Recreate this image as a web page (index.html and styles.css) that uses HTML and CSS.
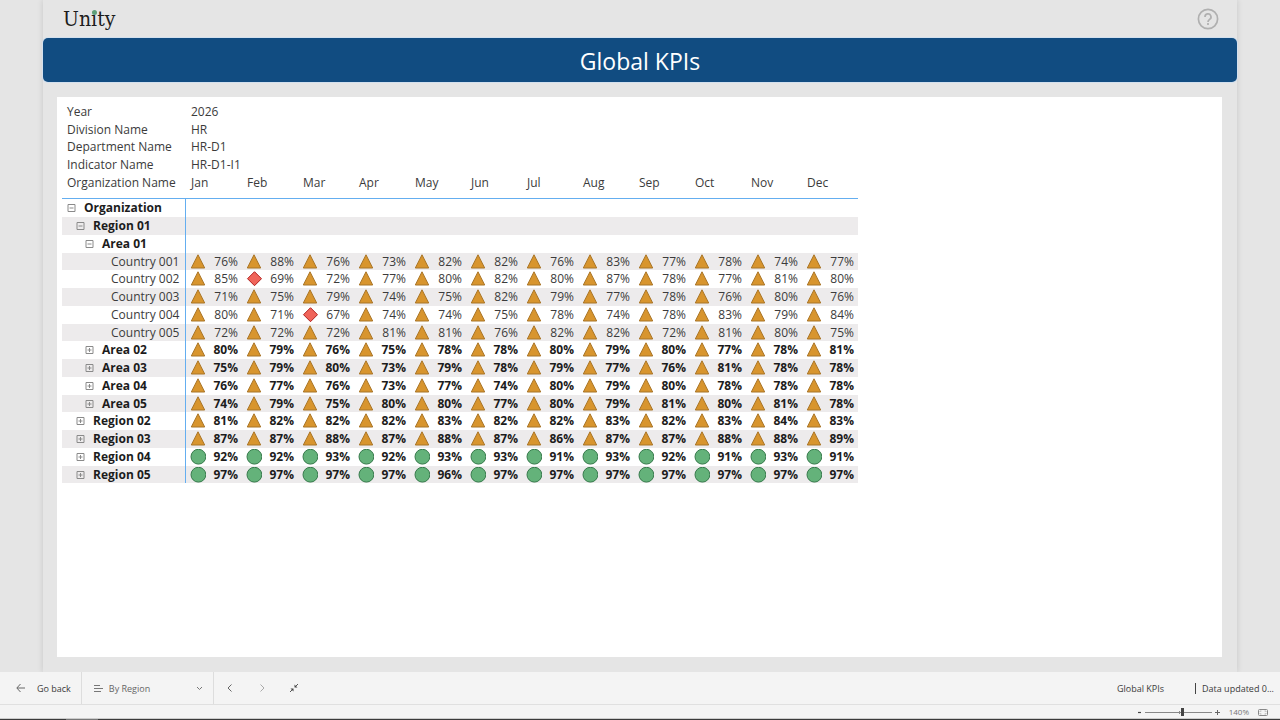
FILE: index.html
```html
<!DOCTYPE html>
<html lang="en">
<head>
<meta charset="utf-8">
<meta name="viewport" content="width=device-width, initial-scale=1">
<title>Global KPIs</title>
<link rel="stylesheet" href="styles.css">
</head>
<body>
<svg class="sprite" aria-hidden="true">
  <symbol id="triangle" viewBox="0 0 16 16"><path d="M8 .8 14.700 14H1.300z" fill="#d8952e" stroke="#a87426"/></symbol>
  <symbol id="diamond" viewBox="0 0 16 16"><path d="M8.500.7l7 7-7 7-7-7z" fill="#f0645a" stroke="#b0201f"/></symbol>
  <symbol id="circle" viewBox="0 0 16 16"><circle cx="8.400" cy="7.700" r="7.400" fill="#64b27a" stroke="#377a4c"/></symbol>
  <symbol id="minus" viewBox="0 0 9 9"><path d="M1 .5h7v7H1zM2.500 4h4" fill="none" stroke="#8a8a8a"/></symbol>
  <symbol id="plus" viewBox="0 0 9 9"><path d="M1 .5h7v7H1zM2.500 4h4M4.500 2v4" fill="none" stroke="#8a8a8a"/></symbol>
</svg>

<main class="stage">
  <div class="report">
    <header class="report-head">
      <div class="logo">Un<span class="logo-i">i</span>ty</div>
      <button class="help" type="button" aria-label="Help">
        <svg width="22" height="22" viewBox="0 0 22 22" fill="none" stroke="#b0b0b0" stroke-width="1.7"><circle cx="11" cy="11" r="9.6"/><path d="M8 9a3 3 0 1 1 4.6 2.4C11.500 12.200 11 12.700 11 14"/><path d="M11 15v2"/></svg>
      </button>
    </header>
    <h1 class="banner">Global KPIs</h1>
    <section class="card">
      <table class="matrix">
        <thead>
          <tr><th scope="row">Year</th><td colspan="12">2026</td></tr>
          <tr><th scope="row">Division Name</th><td colspan="12">HR</td></tr>
          <tr><th scope="row">Department Name</th><td colspan="12">HR-D1</td></tr>
          <tr><th scope="row">Indicator Name</th><td colspan="12">HR-D1-I1</td></tr>
          <tr class="months"><th scope="col">Organization Name</th><th scope="col">Jan</th><th scope="col">Feb</th><th scope="col">Mar</th><th scope="col">Apr</th><th scope="col">May</th><th scope="col">Jun</th><th scope="col">Jul</th><th scope="col">Aug</th><th scope="col">Sep</th><th scope="col">Oct</th><th scope="col">Nov</th><th scope="col">Dec</th></tr>
        </thead>
        <tbody id="rows"></tbody>
      </table>
    </section>
  </div>
</main>

<footer>
  <nav class="toolbar">
    <button class="back" type="button">
      <svg width="10" height="10" viewBox="0 0 10 10" fill="none" stroke="#666"><path d="M9 5H1M4.500 1 .8 5l3.700 4"/></svg>
      Go back
    </button>
    <label class="picker">
      <svg width="9" height="9" viewBox="0 0 9 9" stroke="#777"><path d="M0 1.500h6M0 4.500h9M0 7.500h7"/></svg>
      <select aria-label="Page"><option>By Region</option></select>
      <svg width="7" height="5" viewBox="0 0 7 5" fill="none" stroke="#777"><path d="M1 1l2.500 2.500L6 1"/></svg>
    </label>
    <div class="steps">
      <button type="button" aria-label="Previous"><svg width="8" height="10" viewBox="0 0 8 10" fill="none" stroke="#666"><path d="M5.500 1.500 2 5l3.500 3.500"/></svg></button>
      <button type="button" aria-label="Next"><svg width="8" height="10" viewBox="0 0 8 10" fill="none" stroke="#aaa"><path d="M2.500 1.500 6 5 2.500 8.500"/></svg></button>
      <button type="button" aria-label="Exit full screen"><svg width="8" height="8" viewBox="0 0 8 8"><path d="M8 0 5.500 2.500M0 8l2.500-2.500" stroke="#555"/><path d="M4.500.5v3h3zM.5 4.500h3v3z" fill="#444"/></svg></button>
    </div>
    <div class="status">
      <span class="page-name">Global KPIs</span>
      <span class="updated">Data updated 0...</span>
    </div>
  </nav>
  <div class="zoombar">
    <button type="button" aria-label="Zoom out"><svg width="5" height="5" viewBox="0 0 5 5"><path d="M1 2.500h3" stroke="#444" stroke-width="1.200"/></svg></button>
    <input type="range" min="10" max="240" value="140" aria-label="Zoom">
    <button type="button" aria-label="Zoom in"><svg width="5" height="5" viewBox="0 0 5 5"><path d="M0 2.500h5M2.500 0v5" stroke="#666"/></svg></button>
    <span class="percent">140%</span>
    <button type="button" aria-label="Fit to page"><svg width="10" height="7" viewBox="0 0 10 7" fill="none" stroke="#888"><rect x=".5" y=".5" width="9" height="6" rx="1"/><path d="M2 3V2h1.500M6.500 2H8v1M2 4v1h1.500M6.500 5H8V4" stroke="#aaa" stroke-width=".7"/></svg></button>
  </div>
  <div class="edge"></div>
</footer>
<script src="rows.js"></script>
</body>
</html>
```
FILE: styles.css
```css
* { box-sizing: border-box; }
body {
  margin: 0;
  min-height: 100vh;
  display: flex;
  flex-direction: column;
  background: #e5e5e5;
  color: #3b3b3b;
  font-family: "Open Sans", "Noto Sans", sans-serif;
  font-size: 12px;
}
button, select { font: inherit; color: inherit; background: none; border: 0; padding: 0; margin: 0; }
button { display: inline-flex; align-items: center; }
svg { display: block; flex: none; }
.sprite { position: absolute; width: 0; height: 0; }

.stage { flex: 1; display: flex; overflow: hidden; padding: 0 43px; }
.report { flex: 1; display: flex; flex-direction: column; box-shadow: 0 0 6px rgba(0, 0, 0, .14); background: #e5e5e5; }
.report-head { height: 38px; display: flex; align-items: center; justify-content: space-between; padding: 0 18px 0 20px; }
.logo { font-family: "DejaVu Serif Condensed", "DejaVu Serif", serif; font-size: 21px; line-height: 24px; color: #1c1c1c; }
.logo-i { position: relative; }
.logo-i::after { content: ""; position: absolute; left: 1px; top: 3px; width: 5px; height: 5px; border-radius: 50%; background: #5f9f79; }
.banner { margin: 0; height: 44px; line-height: 46px; border-radius: 5px; background: #114c81; box-shadow: 0 0 0 1px #d3e0ee; color: #fff; text-align: center; font-size: 23px; font-weight: 400; }
.card { flex: 1; margin: 15px 15px 15px 14px; padding: 6px 5px; background: #fff; }

.matrix { table-layout: fixed; width: 796px; border-collapse: separate; border-spacing: 0; line-height: 17px; }
.matrix tr { height: 18px; }
.matrix th, .matrix td { padding: 0 5px; text-align: left; font-weight: 400; white-space: nowrap; vertical-align: top; }
.matrix tr > :first-child { width: 124px; }
.matrix thead tr:nth-child(4n+2) { height: 17px; }
.matrix .months { height: 25px; }
.matrix .months th { border-bottom: 1px solid #64aef0; }
.matrix tbody { line-height: 16px; }
.matrix tbody tr:nth-child(4n) { height: 17px; }
.matrix tbody tr:nth-child(even) { background: #edebec; }
.matrix tbody th { padding: 1px 0 0 5px; border-right: 1px solid #64aef0; }
.matrix tbody td { padding: 1px 4px 0; }
.matrix tbody .group { font-weight: 700; color: #1c1c1c; }
.matrix tbody .group th, .matrix tbody .group td { font-weight: 700; }
.name { display: flex; align-items: center; gap: 8px; }
.level-1 { padding-left: 9px; }
.level-2 { padding-left: 18px; }
.level-3 { padding-left: 44px; }
.kpi { display: flex; align-items: center; justify-content: space-between; }

.toolbar { height: 32px; display: flex; align-items: stretch; background: #f4f4f4; font-size: 9px; }
.back { gap: 11px; padding: 0 10px 0 16px; border-right: 1px solid #ddd; }
.picker { width: 132px; display: flex; align-items: center; gap: 6px; padding: 0 10px 0 12px; border-right: 1px solid #ddd; color: #666; }
.picker select { flex: 1; appearance: none; outline: 0; }
.steps { display: flex; align-items: center; gap: 24px; padding-left: 12px; }
.status { margin-left: auto; display: flex; align-items: center; gap: 31px; padding-right: 6px; }
.updated { display: flex; align-items: center; gap: 6px; }
.updated::before { content: ""; width: 1px; height: 11px; background: #444; }
.zoombar { height: 14px; display: flex; align-items: center; justify-content: flex-end; gap: 3px; padding: 1px 12px 0 0; background: #f4f4f4; border-top: 1px solid #e0e0e0; font-size: 8px; line-height: 12px; color: #777; }
.zoombar input { appearance: none; width: 67px; height: 10px; margin: 0; background: linear-gradient(#888, #888) center / 100% 1px no-repeat, linear-gradient(#888, #888) 34px center / 1px 3px no-repeat; }
.zoombar input::-webkit-slider-thumb { appearance: none; width: 3px; height: 8px; background: #444; }
.percent { margin: 0 6px; }
.edge { height: 2px; border-top: 1px solid #ccc; background: linear-gradient(90deg, #3a3a3a 66px, #777 66px, #777 98px, #3a3a3a 98px); }
```
FILE: rows.js
```js
const data = [
  ["Organization", 0, "minus", ""],
  ["Region 01", 1, "minus", ""],
  ["Area 01", 2, "minus", ""],
  ["Country 001", 3, "", "76 88 76 73 82 82 76 83 77 78 74 77"],
  ["Country 002", 3, "", "85 69 72 77 80 82 80 87 78 77 81 80"],
  ["Country 003", 3, "", "71 75 79 74 75 82 79 77 78 76 80 76"],
  ["Country 004", 3, "", "80 71 67 74 74 75 78 74 78 83 79 84"],
  ["Country 005", 3, "", "72 72 72 81 81 76 82 82 72 81 80 75"],
  ["Area 02", 2, "plus", "80 79 76 75 78 78 80 79 80 77 78 81"],
  ["Area 03", 2, "plus", "75 79 80 73 79 78 79 77 76 81 78 78"],
  ["Area 04", 2, "plus", "76 77 76 73 77 74 80 79 80 78 78 78"],
  ["Area 05", 2, "plus", "74 79 75 80 80 77 80 79 81 80 81 78"],
  ["Region 02", 1, "plus", "81 82 82 82 83 82 82 83 82 83 84 83"],
  ["Region 03", 1, "plus", "87 87 88 87 88 87 86 87 87 88 88 89"],
  ["Region 04", 1, "plus", "92 92 93 92 93 93 91 93 92 91 93 91"],
  ["Region 05", 1, "plus", "97 97 97 97 96 97 97 97 97 97 97 97"]
];

const icon = (id, size) => `<svg width="${size}" height="${size}" aria-hidden="true"><use href="#${id}"/></svg>`;
const shape = value => (value < 70 ? "diamond" : value < 90 ? "triangle" : "circle");
const kpi = value => `<td><div class="kpi">${icon(shape(value), 16)}${value}%</div></td>`;

document.getElementById("rows").innerHTML = data.map(([name, level, toggle, values]) => {
  const button = toggle
    ? `<button type="button" aria-label="${toggle === "plus" ? "Expand" : "Collapse"} ${name}">${icon(toggle, 9)}</button>`
    : "";
  const cells = values ? values.split(" ").map(kpi).join("") : "<td></td>".repeat(12);
  return `<tr class="${toggle ? "group" : "leaf"}"><th scope="row"><div class="name level-${level}">${button}${name}</div></th>${cells}</tr>`;
}).join("");
```
